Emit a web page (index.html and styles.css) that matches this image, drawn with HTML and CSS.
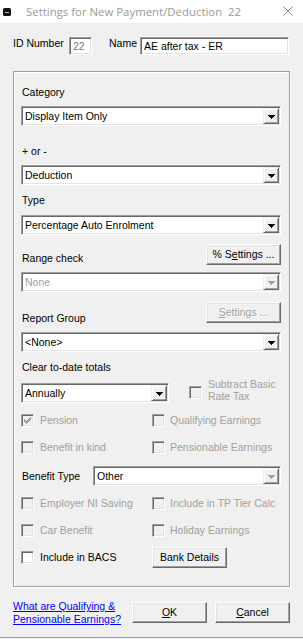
FILE: index.html
```html
<!DOCTYPE html>
<html>
<head>
<meta charset="utf-8">
<link rel="stylesheet" href="styles.css">
</head>
<body>
<div class="window">
  <div class="titlebar">
    <svg class="app-icon" width="8" height="8" viewBox="0 0 8 8"><rect x="0" y="0" width="8" height="8" rx="1.5" fill="#111"/><rect x="2" y="4" width="4" height="1" fill="#bbb"/></svg>
    <span class="title">Settings for New Payment/Deduction&nbsp; 22</span>
    <svg class="close" width="10" height="10" viewBox="0 0 10 10"><path d="M0.5 0.5 L9.5 9.5 M9.5 0.5 L0.5 9.5" stroke="#8a8a8a" stroke-width="1" fill="none"/></svg>
  </div>
  <div class="client">
    <div class="id-row">
      <span class="lbl id-lbl">ID Number</span>
      <div class="edit edit-id">22</div>
      <span class="lbl name-lbl">Name</span>
      <div class="edit edit-name">AE after tax - ER</div>
    </div>

    <div class="group">
      <div class="glbl">Category</div>
      <div class="combo mt7"><span class="combo-text">Display Item Only</span><span class="combo-btn"><svg width="7" height="4" viewBox="0 0 7 4"><path d="M0 0h7v1h-7zM1 1h5v1h-5zM2 2h3v1h-3zM3 3h1v1h-1z" fill="#000"/></svg></span></div>

      <div class="glbl mt19">+ or -</div>
      <div class="combo mt7"><span class="combo-text">Deduction</span><span class="combo-btn"><svg width="7" height="4" viewBox="0 0 7 4"><path d="M0 0h7v1h-7zM1 1h5v1h-5zM2 2h3v1h-3zM3 3h1v1h-1z" fill="#000"/></svg></span></div>

      <div class="glbl mt9">Type</div>
      <div class="combo mt8"><span class="combo-text">Percentage Auto Enrolment</span><span class="combo-btn"><svg width="7" height="4" viewBox="0 0 7 4"><path d="M0 0h7v1h-7zM1 1h5v1h-5zM2 2h3v1h-3zM3 3h1v1h-1z" fill="#000"/></svg></span></div>

      <div class="btn-row range-row mt9">
        <span class="glbl">Range check</span>
        <div class="btn">% S<u>e</u>ttings ...</div>
      </div>
      <div class="combo disabled mt7"><span class="combo-text">None</span><span class="combo-btn"><svg width="7" height="4" viewBox="0 0 7 4"><path d="M0 0h7v1h-7zM1 1h5v1h-5zM2 2h3v1h-3zM3 3h1v1h-1z" fill="#a0a0a0"/></svg></span></div>

      <div class="btn-row report-row mt10">
        <span class="glbl">Report Group</span>
        <div class="btn disabled"><u>S</u>ettings ...</div>
      </div>
      <div class="combo mt7"><span class="combo-text">&lt;None&gt;</span><span class="combo-btn"><svg width="7" height="4" viewBox="0 0 7 4"><path d="M0 0h7v1h-7zM1 1h5v1h-5zM2 2h3v1h-3zM3 3h1v1h-1z" fill="#000"/></svg></span></div>

      <div class="glbl mt9">Clear to-date totals</div>
      <div class="annual-row mt4">
        <div class="combo combo-annual"><span class="combo-text">Annually</span><span class="combo-btn"><svg width="7" height="4" viewBox="0 0 7 4"><path d="M0 0h7v1h-7zM1 1h5v1h-5zM2 2h3v1h-3zM3 3h1v1h-1z" fill="#000"/></svg></span></div>
        <div class="check disabled subtract">
          <span class="box"></span>
          <span class="two-line">Subtract Basic<br>Rate Tax</span>
        </div>
      </div>

      <div class="check-row mt11">
        <div class="check disabled"><span class="box"><svg class="tick" width="7" height="7" viewBox="0 0 7 7"><path d="M0 2h1v3h-1zM1 3h1v3h-1zM2 4h1v3h-1zM3 3h1v3h-1zM4 2h1v3h-1zM5 1h1v3h-1zM6 0h1v3h-1z" fill="#a0a0a0"/></svg></span><span>Pension</span></div>
        <div class="check disabled"><span class="box"></span><span>Qualifying Earnings</span></div>
      </div>
      <div class="check-row mt14">
        <div class="check disabled"><span class="box"></span><span>Benefit in kind</span></div>
        <div class="check disabled"><span class="box"></span><span>Pensionable Earnings</span></div>
      </div>

      <div class="bt-row mt12">
        <span class="bt-lbl">Benefit Type</span>
        <div class="combo combo-other"><span class="combo-text">Other</span><span class="combo-btn"><svg width="7" height="4" viewBox="0 0 7 4"><path d="M0 0h7v1h-7zM1 1h5v1h-5zM2 2h3v1h-3zM3 3h1v1h-1z" fill="#a0a0a0"/></svg></span></div>
      </div>

      <div class="check-row mt11">
        <div class="check disabled"><span class="box"></span><span>Employer NI Saving</span></div>
        <div class="check disabled"><span class="box"></span><span>Include in TP Tier Calc</span></div>
      </div>
      <div class="check-row mt14">
        <div class="check disabled"><span class="box"></span><span>Car Benefit</span></div>
        <div class="check disabled"><span class="box"></span><span>Holiday Earnings</span></div>
      </div>
      <div class="bacs-row mt10">
        <div class="check"><span class="box"></span><span>Include in BACS</span></div>
        <div class="btn">Bank Details</div>
      </div>
    </div>

    <div class="footer">
      <div class="link">What are Qualifying &amp;<br>Pensionable Earnings?</div>
      <div class="btn"><u>O</u>K</div>
      <div class="btn"><u>C</u>ancel</div>
    </div>
  </div>
</div>
</body>
</html>
```

FILE: styles.css
```css
* { box-sizing: border-box; }
html, body { margin: 0; padding: 0; }
body {
  width: 303px;
  height: 639px;
  overflow: hidden;
  background: #f0f0f0;
  font-family: "Liberation Sans", Arial, sans-serif;
  font-size: 10.5px;
  color: #000;
}
u { text-decoration: underline; text-underline-offset: 1px; }

.window {
  width: 303px;
  height: 638px;
  border-bottom: 1px solid #a0a0a0;
  display: flex;
  flex-direction: column;
}

.titlebar {
  height: 23px;
  flex: none;
  background: #fff;
  display: flex;
  align-items: center;
  padding: 0 10px 0 3px;
}
.app-icon { display: block; margin-right: 15px; margin-top: 1px; }
.title {
  font-family: "Open Sans", "Noto Sans", sans-serif;
  font-size: 11.4px;
  color: #9a9a9a;
  line-height: 16px;
  white-space: nowrap;
}
.close { display: block; margin-left: auto; align-self: flex-start; margin-top: 6px; }

.client { flex: 1; padding: 14px 13px 0 13px; }

.lbl { line-height: 13px; white-space: nowrap; }
.id-row { display: flex; align-items: flex-start; height: 18px; }
.id-lbl { width: 56px; }
.name-lbl { width: 31px; margin-left: 17px; }

.edit {
  height: 18px;
  border: 1px solid;
  border-color: #a0a0a0 #fff #fff #a0a0a0;
  box-shadow: inset 1px 1px 0 #696969, inset -1px -1px 0 #e3e3e3;
  background: #fff;
  padding-left: 3px;
  line-height: 16px;
  white-space: nowrap;
  overflow: hidden;
}
.edit-id { width: 23px; color: #7a7a7a; }
.edit-name { width: 149px; }

.group {
  margin-top: 16px;
  width: 277px;
  height: 516px;
  border: 1px solid #a0a0a0;
  box-shadow: inset 1px 1px 0 #fff, 1px 1px 0 #fff;
  padding: 14px 8px 0 7px;
}
.glbl { display: block; height: 13px; line-height: 13px; padding-left: 1px; white-space: nowrap; }

.mt4 { margin-top: 4px; }
.mt7 { margin-top: 7px; }
.mt8 { margin-top: 8px; }
.mt9 { margin-top: 9px; }
.mt10 { margin-top: 10px; }
.mt11 { margin-top: 11px; }
.mt12 { margin-top: 12px; }
.mt14 { margin-top: 14px; }
.mt19 { margin-top: 19px; }

.combo {
  height: 20px;
  border: 1px solid;
  border-color: #a0a0a0 #fff #fff #a0a0a0;
  box-shadow: inset 1px 1px 0 #696969, inset -1px -1px 0 #e3e3e3;
  background: #fff;
  padding: 1px;
  display: flex;
}
.combo-text {
  flex: 1;
  padding-left: 2px;
  line-height: 16px;
  white-space: nowrap;
  overflow: hidden;
}
.combo-btn {
  width: 16px;
  height: 16px;
  flex: none;
  border: 1px solid;
  border-color: #f0f0f0 #696969 #696969 #f0f0f0;
  box-shadow: inset 1px 1px 0 #fff, inset -1px -1px 0 #a0a0a0;
  background: #f0f0f0;
  display: flex;
  align-items: center;
  justify-content: center;
}
.combo-btn svg { display: block; margin-top: 1px; }
.combo.disabled .combo-text { color: #a0a0a0; }

.btn {
  width: 75px;
  height: 21px;
  flex: none;
  border: 1px solid;
  border-color: #fff #696969 #696969 #fff;
  box-shadow: inset -1px -1px 0 #a0a0a0, inset 1px 1px 0 #e3e3e3;
  background: #f0f0f0;
  display: flex;
  align-items: center;
  justify-content: center;
  line-height: 13px;
  white-space: nowrap;
}
.btn.disabled { color: #a0a0a0; text-shadow: 1px 1px 0 #fff; }

.btn-row { display: flex; justify-content: space-between; align-items: flex-start; }
.btn-row .glbl { align-self: flex-end; }
.range-row { height: 21px; }
.report-row { height: 23px; }

.annual-row { display: flex; align-items: flex-start; height: 25px; }
.combo-annual { width: 148px; margin-top: 5px; }
.subtract { margin-left: 20px; align-items: flex-start; gap: 5px; }
.subtract .box { margin-top: 4px; }
.two-line { line-height: 12px; }

.check { display: flex; align-items: center; gap: 6px; line-height: 13px; white-space: nowrap; }
.box {
  display: block;
  width: 13px;
  height: 13px;
  flex: none;
  border: 1px solid;
  border-color: #a0a0a0 #fff #fff #a0a0a0;
  box-shadow: inset 1px 1px 0 #696969, inset -1px -1px 0 #e3e3e3;
  background: #fff;
}
.tick { display: block; margin: 2px; }
.check.disabled { color: #a0a0a0; }
.check.disabled .box { background: #f0f0f0; }

.check-row { display: grid; grid-template-columns: 131px 1fr; height: 13px; }
.check-row .check:nth-child(2) { gap: 5px; }

.bt-row { display: flex; align-items: center; height: 20px; }
.bt-lbl { width: 72px; padding-left: 1px; white-space: nowrap; }
.combo-other { width: 188px; }

.bacs-row { display: grid; grid-template-columns: 131px 1fr; align-items: center; height: 21px; }

.footer { display: flex; align-items: flex-start; margin-top: 13px; }
.link {
  width: 119px;
  color: #0000ff;
  text-decoration: underline;
  line-height: 13px;
  white-space: nowrap;
}
.footer .btn { margin-top: 2px; }
.footer .btn + .btn { margin-left: 8px; }
```
